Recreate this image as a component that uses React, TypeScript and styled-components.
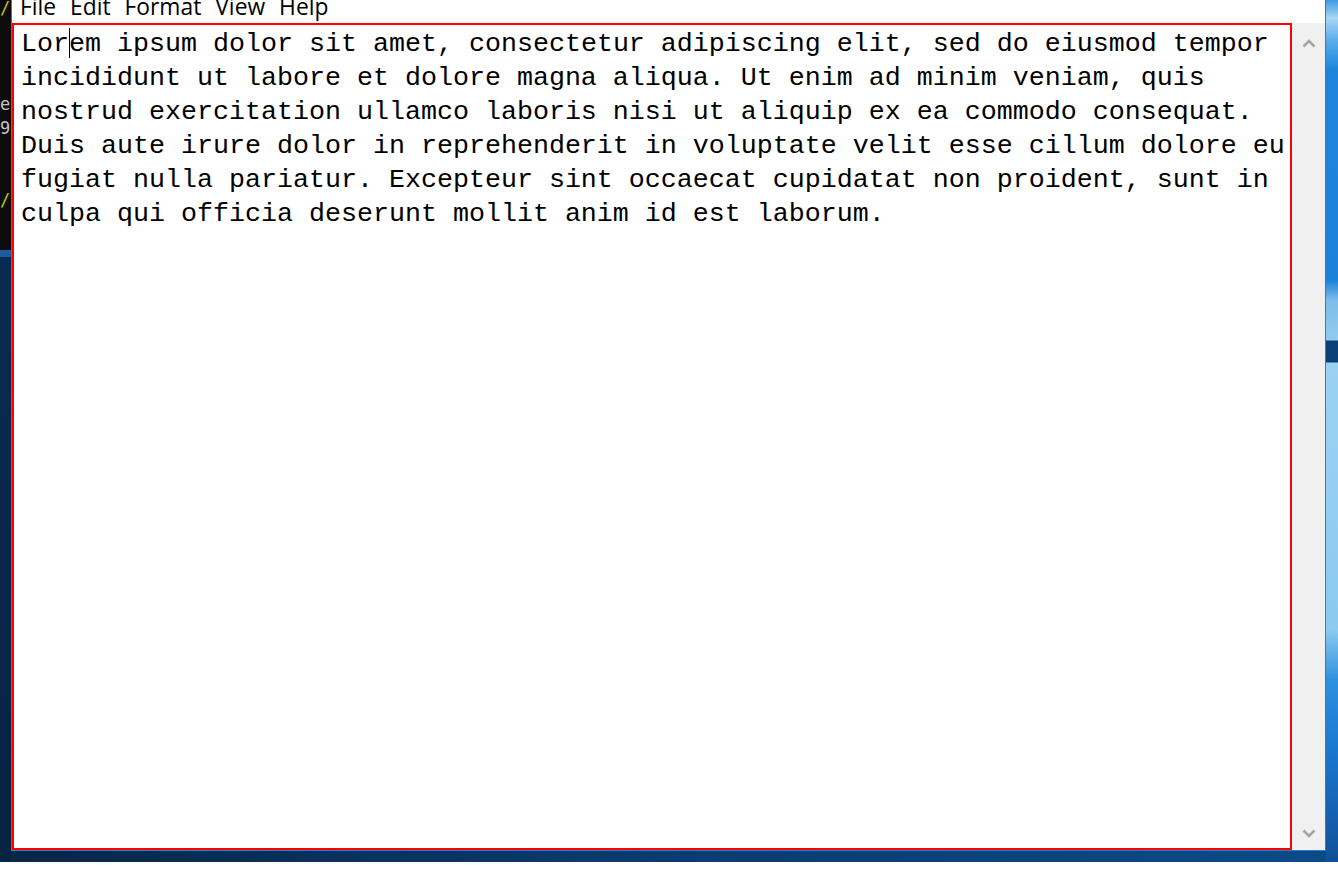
import * as React from "react";
import styled, { createGlobalStyle } from "styled-components";

const GlobalStyle = createGlobalStyle`
  html, body {
    margin: 0;
    padding: 0;
    background: #ffffff;
    overflow: hidden;
  }
`;

const LOREM =
  "Lorem ipsum dolor sit amet, consectetur adipiscing elit, sed do eiusmod tempor incididunt ut labore et dolore magna aliqua. Ut enim ad minim veniam, quis nostrud exercitation ullamco laboris nisi ut aliquip ex ea commodo consequat. Duis aute irure dolor in reprehenderit in voluptate velit esse cillum dolore eu fugiat nulla pariatur. Excepteur sint occaecat cupidatat non proident, sunt in culpa qui officia deserunt mollit anim id est laborum.";

const menuItems = ["File", "Edit", "Format", "View", "Help"];

// bits of the console window that peek out on the left
const terminalLines = [
  { text: "/", tone: "yellow" },
  { text: "", tone: "gray" },
  { text: "", tone: "gray" },
  { text: "", tone: "gray" },
  { text: "e", tone: "gray" },
  { text: "9", tone: "gray" },
  { text: "", tone: "gray" },
  { text: "", tone: "gray" },
  { text: "/", tone: "yellow" },
];

const Chevron: React.FC<{ down?: boolean }> = ({ down }) => (
  <svg width="14" height="9" viewBox="0 0 14 9">
    <polyline
      points={down ? "1.5,1.5 7,7 12.5,1.5" : "1.5,7.5 7,2 12.5,7.5"}
      fill="none"
      stroke="#a5a5a5"
      strokeWidth="2.6"
    />
  </svg>
);

export default function App() {
  const caretAt = 3;
  return (
    <>
      <GlobalStyle />
      <Screen>
        <LeftStrip>
          <Terminal>
            {terminalLines.map((line, i) => (
              <TermLine key={i} tone={line.tone}>
                {line.text || "\u00a0"}
              </TermLine>
            ))}
          </Terminal>
          <TermEdge />
        </LeftStrip>
        <Window>
          <MenuBar>
            {menuItems.map(item => (
              <MenuItem key={item}>{item}</MenuItem>
            ))}
          </MenuBar>
          <Body>
            <Editor>
              {LOREM.slice(0, caretAt)}
              <Caret />
              {LOREM.slice(caretAt)}
            </Editor>
            <ScrollBar>
              <ScrollButton h={40}>
                <Chevron />
              </ScrollButton>
              <ScrollButton h={34}>
                <Chevron down />
              </ScrollButton>
            </ScrollBar>
          </Body>
        </Window>
        <RightStrip />
      </Screen>
    </>
  );
}

const Screen = styled.div`
  display: flex;
  align-items: flex-start;
  width: 1338px;
  height: 862px;
  background: linear-gradient(to right, #082647 0%, #0a3a6c 45%, #0b4b88 100%);
`;

const LeftStrip = styled.div`
  width: 11px;
  height: 862px;
  flex-shrink: 0;
  display: flex;
  flex-direction: column;
  background: linear-gradient(to bottom, #0b2e57 0%, #072343 100%);
  overflow: hidden;
`;

const Terminal = styled.div`
  height: 250px;
  background: #0c0c0c;
  overflow: hidden;
  & > :first-child {
    margin-top: -4px;
  }
`;

const TermLine = styled.div<{ tone: string }>`
  font-family: "DejaVu Sans Mono", monospace;
  font-size: 17px;
  line-height: 24px;
  white-space: pre;
  color: ${p => (p.tone === "yellow" ? "#c2c21c" : "#c4c4c4")};
`;

const TermEdge = styled.div`
  height: 7px;
  background: #1f5b9c;
`;

const Window = styled.div`
  width: 1315px;
  height: 851px;
  flex-shrink: 0;
  box-sizing: border-box;
  display: flex;
  flex-direction: column;
  background: #ffffff;
  border: 1px solid #1b82d8;
  border-top: none;
`;

const MenuBar = styled.div`
  height: 23px;
  display: flex;
  align-items: flex-start;
  padding-left: 1px;
  overflow: hidden;
  background: #ffffff;
`;

const MenuItem = styled.div`
  padding: 0 7px;
  font-family: "Open Sans", "Noto Sans", sans-serif;
  font-size: 22.8px;
  line-height: 14px;
  color: #000000;
`;

const Body = styled.div`
  flex: 1;
  display: flex;
  min-height: 0;
`;

const Editor = styled.div`
  flex: 1;
  box-sizing: border-box;
  border: 2px solid #ff0000;
  padding: 2px 0 0 7px;
  font-family: "Liberation Mono", monospace;
  font-size: 26.66px;
  line-height: 34px;
  color: #000000;
  white-space: pre-wrap;
  word-wrap: break-word;
  overflow: hidden;
`;

const Caret = styled.span`
  display: inline-block;
  width: 1px;
  height: 30px;
  margin-right: -1px;
  background: #000000;
  vertical-align: -7px;
`;

const ScrollBar = styled.div`
  width: 33px;
  flex-shrink: 0;
  display: flex;
  flex-direction: column;
  justify-content: space-between;
  background: #f0f0f0;
`;

const ScrollButton = styled.div<{ h: number }>`
  height: ${p => p.h}px;
  display: flex;
  align-items: center;
  justify-content: center;
`;

const RightStrip = styled.div`
  width: 12px;
  height: 862px;
  flex-shrink: 0;
  background: linear-gradient(
    to bottom,
    #3d9ae3 0px,
    #a8d6f4 18px,
    #5aaeea 40px,
    #1c84dc 70px,
    #1b82da 280px,
    #7cbdea 300px,
    #92cbf0 340px,
    #0b3f78 341px,
    #0b3f78 362px,
    #9cd1f2 363px,
    #8ccaf0 630px,
    #2d90e0 680px,
    #1a74cc 760px,
    #114f98 862px
  );
`;
